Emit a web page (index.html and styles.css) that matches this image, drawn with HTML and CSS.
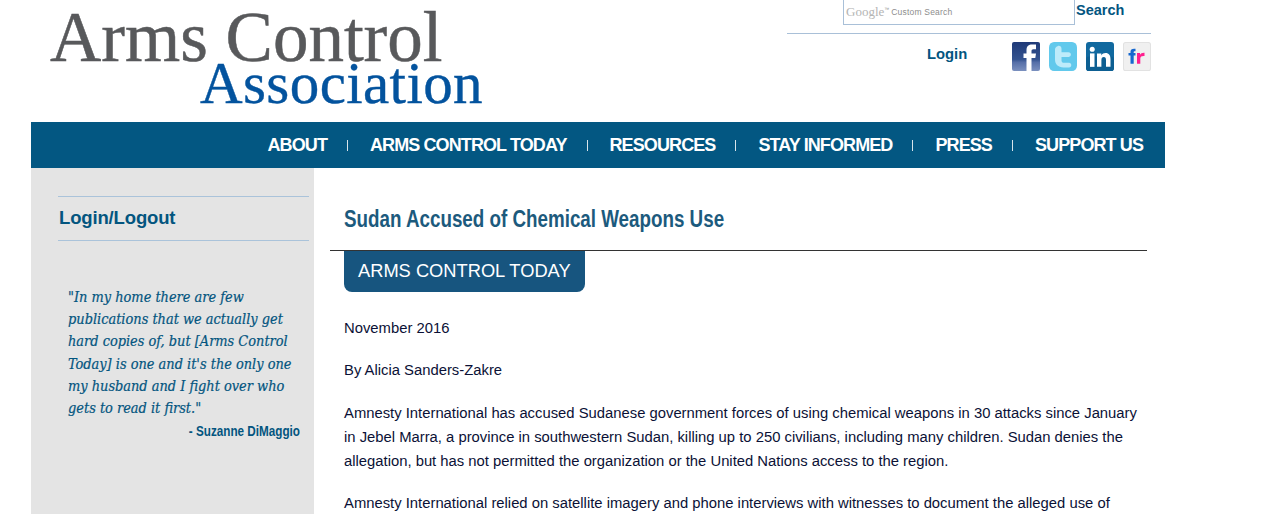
FILE: index.html
```html
<!DOCTYPE html>
<html lang="en">
<head>
<meta charset="utf-8">
<title>Sudan Accused of Chemical Weapons Use</title>
<link rel="stylesheet" href="styles.css">
</head>
<body>
<div class="page">
  <header class="top">
    <a class="logo">
      <span class="logo-main">Arms Control</span>
      <span class="logo-sub">Association</span>
    </a>
    <div class="tools">
      <div class="search-row">
        <div class="search-box"><span class="g-mark">Google</span><span class="g-tm">™</span><span class="g-label">Custom Search</span></div>
        <span class="search-btn">Search</span>
      </div>
      <div class="social-row">
        <span class="login">Login</span>
        <div class="icons">
          <svg class="icon" viewBox="0 0 28 28" preserveAspectRatio="none"><defs><linearGradient id="fb" x1="0" y1="0" x2="0" y2="1"><stop offset="0" stop-color="#1f3a78"/><stop offset=".6" stop-color="#34538f"/><stop offset=".7" stop-color="#566fa8"/><stop offset="1" stop-color="#7b90bf"/></linearGradient></defs><rect width="28" height="28" rx="2" fill="url(#fb)"/><path d="M14.500 28V15.500H11.500V11H14.500V8C14.500 4 16.800 2.500 20 2.500H24V7H21.500C19.800 7 19.500 7.800 19.500 9V11H24L23.300 15.500H19.500V28z" fill="#fff"/></svg>
          <svg class="icon" viewBox="0 0 28 28" preserveAspectRatio="none"><rect width="28" height="28" rx="5" fill="#62c9ec"/><path d="M8.500 4C10.500 3 12.500 4.300 12.500 6.500V10H19.500C22.500 10 22.800 14 19.800 14.500H12.500V17.500C12.500 19.300 13.500 20 15 20H20C23 20 23 24.500 20 24.500H14.500C9 24.500 6 21.500 6 17V7C6 5.700 7 4.600 8.500 4z" fill="#bdebfa"/></svg>
          <svg class="icon" viewBox="0 0 28 28" preserveAspectRatio="none"><rect width="28" height="28" rx="3" fill="#11699f"/><rect y="14" width="28" height="14" rx="3" fill="#0d5f92"/><rect x="4" y="11" width="4.500" height="13" fill="#fff"/><circle cx="6.200" cy="7" r="2.500" fill="#fff"/><path d="M11 11h4.300v2c1-1.500 2.400-2.300 4.200-2.300 3.500 0 5 2.200 5 6V24H20v-6.500c0-2-.6-3-2.200-3-1.600 0-2.400 1.200-2.400 3V24H11z" fill="#fff"/></svg>
          <svg class="icon" viewBox="0 0 28 28" preserveAspectRatio="none"><rect x=".5" y=".5" width="27" height="27" rx="2" fill="#f0f0f0" stroke="#e2e2e2"/><path d="M7.500 21V13H5.500V10.500H7.500V9.500C7.500 7 9 6.300 12.500 6.600V9C11 8.900 10.700 9.100 10.700 9.800V10.500H12.500V13H10.700V21z" fill="#1668cf"/><path d="M14 10.500H17V12.300C17.700 11 19 10.300 21.500 10.400V13.500C18.800 13.300 17.300 14 17.300 16V21H14z" fill="#ff1f8f"/></svg>
        </div>
      </div>
    </div>
  </header>
  <nav class="nav">
    <a class="nav-item">ABOUT</a><i class="sep"></i>
    <a class="nav-item">ARMS CONTROL TODAY</a><i class="sep"></i>
    <a class="nav-item">RESOURCES</a><i class="sep"></i>
    <a class="nav-item">STAY INFORMED</a><i class="sep"></i>
    <a class="nav-item">PRESS</a><i class="sep"></i>
    <a class="nav-item">SUPPORT US</a>
  </nav>
  <div class="columns">
    <aside class="side">
      <h2 class="side-title">Login/Logout</h2>
      <blockquote class="quote">"In my home there are few<br>publications that we actually get<br>hard copies of, but [Arms Control<br>Today] is one and it's the only one<br>my husband and I fight over who<br>gets to read it first."</blockquote>
      <div class="quote-by">- Suzanne DiMaggio</div>
    </aside>
    <main class="main">
      <h1 class="title"><span class="title-text">Sudan Accused of Chemical Weapons Use</span></h1>
      <div class="tab">ARMS CONTROL TODAY</div>
      <div class="article">
        <p>November 2016</p>
        <p>By Alicia Sanders-Zakre</p>
        <p>Amnesty International has accused Sudanese government forces of using chemical weapons in 30 attacks since January in Jebel Marra, a province in southwestern Sudan, killing up to 250 civilians, including many children. Sudan denies the allegation, but has not permitted the organization or the United Nations access to the region.</p>
        <p>Amnesty International relied on satellite imagery and phone interviews with witnesses to document the alleged use of</p>
      </div>
    </main>
  </div>
</div>
</body>
</html>
```
FILE: styles.css
```css
html, body { margin: 0; padding: 0; height: 514px; overflow: hidden; background: #fff; }
body { font-family: "Liberation Sans", Arial, sans-serif; color: #0b1136; }
.page { width: 1134px; margin-left: 31px; }

.top { height: 122px; display: flex; justify-content: space-between; }
.logo { display: flex; flex-direction: column; padding-left: 19px; font-family: "Liberation Serif", serif; }
.logo-main { font-size: 71px; line-height: 54px; margin-top: 10px; color: #58595b; -webkit-text-stroke: .5px #58595b; white-space: nowrap; }
.logo-sub { font-size: 59px; line-height: 40px; margin-top: -1px; margin-left: 150px; color: #03539e; -webkit-text-stroke: .4px #03539e; letter-spacing: .4px; white-space: nowrap; }

.tools { width: 364px; margin-right: 14px; display: flex; flex-direction: column; }
.search-row { height: 33px; border-bottom: 1px solid #a9c0d8; display: flex; align-items: flex-start; }
.search-box { margin-left: 56px; width: 228px; height: 24px; border: 1px solid #a9c0d8; border-top: 0; display: flex; align-items: center; padding-left: 2px; color: #8d8d8d; }
.g-mark { font-family: "Liberation Serif", serif; font-size: 13px; color: #b4b4b4; }
.g-tm { font-size: 5px; margin-bottom: 6px; margin-right: 2px; }
.g-label { font-size: 8.500px; letter-spacing: .2px; }
.search-btn { margin-left: 1px; font-size: 14.500px; font-weight: bold; line-height: 20px; color: #03557f; }

.social-row { display: flex; justify-content: space-between; padding-top: 8px; }
.login { margin-left: 140px; margin-top: 2px; font-size: 14.800px; font-weight: bold; line-height: 20px; color: #03557f; }
.icons { display: flex; gap: 9px; }
.icon { width: 28px; height: 29px; display: block; }

.nav { height: 46px; background: #035782; display: flex; align-items: center; justify-content: flex-end; padding-right: 22px; }
.nav-item { font-size: 18px; font-weight: bold; color: #fff; letter-spacing: -.9px; line-height: 46px; white-space: nowrap; }
.sep { width: 1px; height: 11px; background: #d8e4ea; margin: 0 22px 0 20px; }

.columns { display: flex; height: 346px; }
.side { width: 283px; background: #e4e4e4; box-sizing: border-box; padding: 28px 5px 0 27px; flex: none; }
.side-title { margin: 0; height: 43px; border-top: 1px solid #aac3da; border-bottom: 1px solid #aac3da; font-size: 18.500px; font-weight: bold; line-height: 42px; letter-spacing: -.15px; padding-left: 1px; color: #03557f; }
.quote { margin: 45px 0 0 10px; font-family: "DejaVu Serif", serif; font-stretch: condensed; font-style: italic; font-size: 14.400px; line-height: 22.200px; color: #03557f; -webkit-text-stroke: .2px #03557f; white-space: nowrap; }
.quote-by { margin-top: 2px; padding-right: 9px; text-align: right; font-size: 15px; font-weight: bold; line-height: 20px; color: #03557f; transform: scaleX(.78); transform-origin: 242px 0; }

.main { flex: 1; padding: 0 18px 0 16px; }
.title { margin: 0; height: 83px; box-sizing: border-box; padding: 37px 0 0 14px; border-bottom: 1px solid #333; font-size: 23px; font-weight: bold; line-height: 28px; color: #1c5a7d; white-space: nowrap; }
.title-text { display: inline-block; transform: scaleX(.817); transform-origin: left center; }
.tab { margin-left: 14px; display: inline-block; height: 41px; line-height: 40px; padding: 0 14px; background: #17557f; border-radius: 0 0 8px 8px; color: #fff; font-size: 18.300px; }
.article { padding-left: 14px; font-size: 14.820px; line-height: 24px; }
.article p { margin: 0 0 18.400px; }
.article p:first-child { margin-top: 23.900px; }
```
